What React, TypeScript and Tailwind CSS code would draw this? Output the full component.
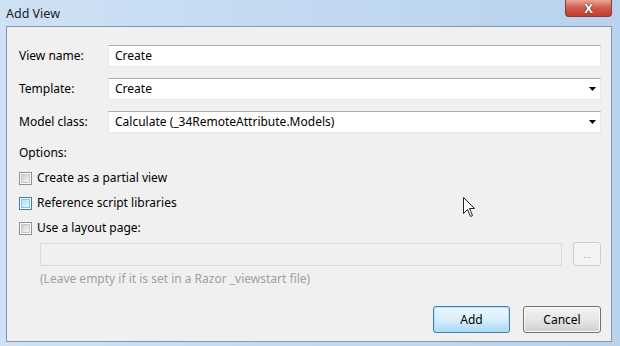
import React from "react";

const font = { fontFamily: '"Noto Sans", "Open Sans", Arial, sans-serif' };

function Checkbox({ hover = false }: { hover?: boolean }) {
  return (
    <div
      className={
        "w-[13px] h-[13px] border p-[1px] " +
        (hover ? "border-[#3c7fb1] bg-white" : "border-[#8e8f8f] bg-white")
      }
    >
      <div
        className={
          "w-full h-full " +
          (hover
            ? "bg-gradient-to-br from-[#b1dffd] to-[#e9f7fe] border border-[#79c6f9]"
            : "bg-gradient-to-br from-[#cbcfd5] to-[#f6f6f6] border border-[#c3c7cc]")
        }
      />
    </div>
  );
}

function Arrow() {
  return (
    <svg width="7" height="4" viewBox="0 0 7 4">
      <path d="M0 0 H7 L3.5 4 Z" fill="#000" />
    </svg>
  );
}

export default function App() {
  return (
    <div
      className="relative w-[620px] h-[346px] flex flex-col pl-[6px] pr-[8px] pb-[4px] bg-gradient-to-r from-[#cfe1f4] via-[#c3d9f1] to-[#b8d2ee] text-[12px] text-black"
      style={font}
    >
      <div className="h-[26px] flex justify-between items-start">
        <div className="pt-[5px] text-[12.5px] text-[#1b1b1b]">Add View</div>
        <div className="w-[47px] h-[17px] rounded-b-[4px] border border-t-0 border-[#8c3a33] bg-gradient-to-b from-[#e7a698] via-[#cf5a4b] to-[#c23d2f] flex items-center justify-center">
          <span
            className="text-white font-bold text-[13px] leading-none"
            style={{ textShadow: "0 0 1px #3b0f0a, 0 0 1px #3b0f0a" }}
          >
            X
          </span>
        </div>
      </div>
      <div className="flex-1 border border-[#8697ab] bg-[#f0f0f0] pl-[12px] pr-[10px] pt-[18px] flex flex-col">
        <div className="flex flex-col gap-[11px]">
          <div className="flex items-center h-[22px]">
            <div className="w-[89px]">View name:</div>
            <div className="flex-1 h-full bg-white border border-[#e3e9ef] border-t-[#abadb3] flex items-center px-[6px]">
              Create
            </div>
          </div>
          <div className="flex items-center h-[22px]">
            <div className="w-[89px]">Template:</div>
            <div className="flex-1 h-full bg-white border border-[#e3e9ef] border-t-[#abadb3] flex items-center pl-[6px] pr-[4px] justify-between">
              <span>Create</span>
              <Arrow />
            </div>
          </div>
          <div className="flex items-center h-[22px]">
            <div className="w-[89px]">Model class:</div>
            <div className="flex-1 h-full bg-white border border-[#e3e9ef] border-t-[#abadb3] flex items-center pl-[6px] pr-[4px] justify-between">
              <span>Calculate (_34RemoteAttribute.Models)</span>
              <Arrow />
            </div>
          </div>
        </div>
        <div className="mt-[12px] h-[16px] leading-[16px]">Options:</div>
        <div className="mt-[9px] flex flex-col gap-[9px]">
          <div className="flex items-center gap-[5px] h-[16px]">
            <Checkbox />
            <span>Create as a partial view</span>
          </div>
          <div className="flex items-center gap-[5px] h-[16px]">
            <Checkbox hover />
            <span>Reference script libraries</span>
          </div>
          <div className="flex items-center gap-[5px] h-[16px]">
            <Checkbox />
            <span>Use a layout page:</span>
          </div>
        </div>
        <div className="mt-[6px] pl-[21px] flex items-center gap-[11px]">
          <div className="flex-1 h-[23px] border border-[#d9d9d9] bg-[#f0f0f0]" />
          <div className="w-[28px] h-[24px] rounded-[3px] border border-[#cdcdcd] bg-[#f4f4f4] flex items-center justify-center text-[#a0a0a0] text-[9px] leading-none">
            ...
          </div>
        </div>
        <div className="mt-[5px] pl-[21px] text-[#a0a0a0] h-[16px] leading-[16px]">
          (Leave empty if it is set in a Razor _viewstart file)
        </div>
        <div className="mt-[19px] flex justify-end gap-[13px]">
          <div className="w-[77px] h-[27px] rounded-[3px] border border-[#3c7fb1] bg-gradient-to-b from-[#eaf6fd] via-[#d9f0fc] to-[#a7d9f5] flex items-center justify-center shadow-[inset_0_0_0_1px_#b5e0f8]">
            Add
          </div>
          <div className="w-[78px] h-[27px] rounded-[3px] border border-[#707070] bg-gradient-to-b from-[#f2f2f2] via-[#e6e6e6] to-[#cfcfcf] flex items-center justify-center shadow-[inset_0_0_0_1px_#fcfcfc]">
            Cancel
          </div>
        </div>
      </div>
      <svg
        className="absolute left-[463px] top-[197px]"
        width="13"
        height="21"
        viewBox="0 0 13 21"
      >
        <path
          d="M0.5 0.5 V16.5 L4.5 12.5 L7.5 19.5 L9.5 18.5 L6.5 11.5 H11.5 Z"
          fill="#fff"
          stroke="#222"
          strokeWidth="1"
          strokeLinejoin="miter"
        />
      </svg>
    </div>
  );
}
